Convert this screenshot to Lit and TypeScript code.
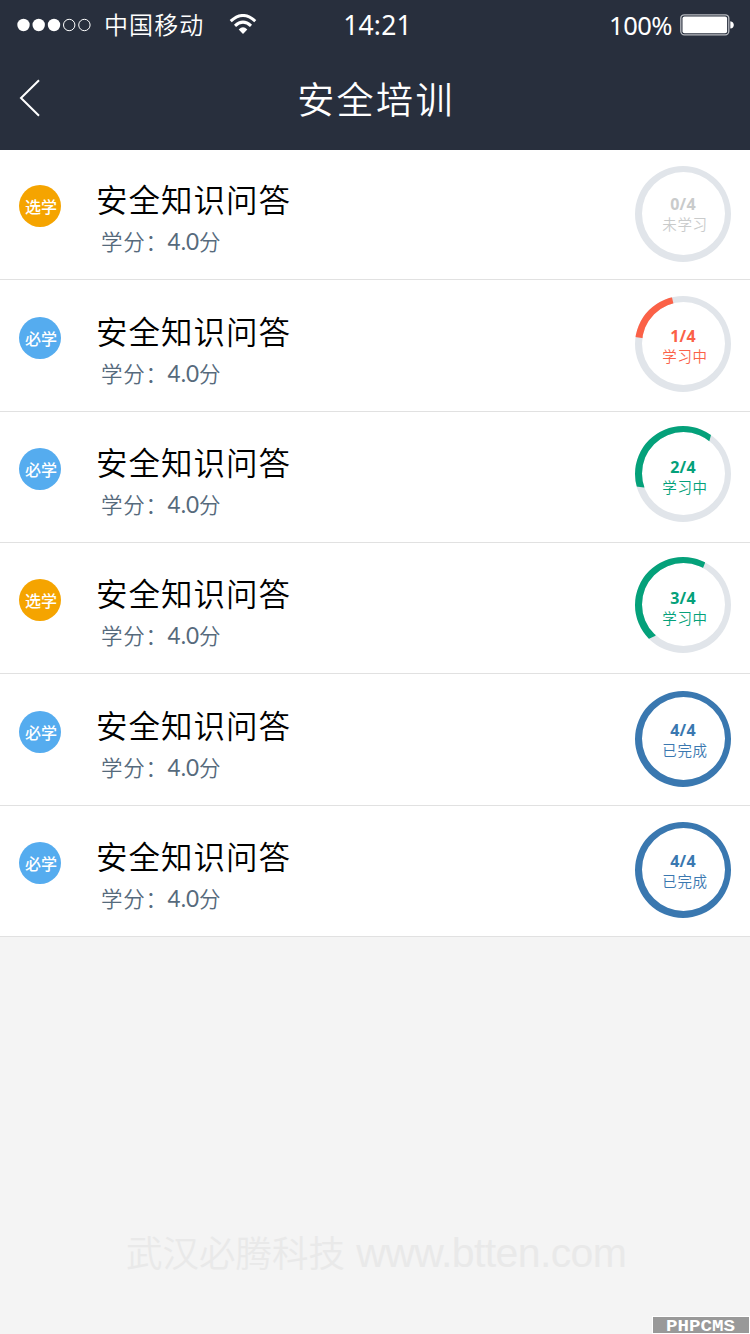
import { LitElement, html, css, svg } from "lit";
import { customElement, property } from "lit/decorators.js";
import { classMap } from "lit/directives/class-map.js";

interface Course {
  kind: "optional" | "required";
  done: number;
  state: string;
  tone: "idle" | "warm" | "green" | "blue";
  height: number;
  ringY: number;
  arc?: string;
}

const COURSES: Course[] = [
  { kind: "optional", done: 0, state: "未学习", tone: "idle", height: 130, ringY: 3 },
  { kind: "required", done: 1, state: "学习中", tone: "warm", height: 132, ringY: 1,
    arc: "M0 0L-60 -8.6L-60 -60L-14.2 -60Z" },
  { kind: "required", done: 2, state: "学习中", tone: "green", height: 131, ringY: 0,
    arc: "M0 0L-39 13.6L-47 12.6L-60 12L-60 -60L28 -60L28 -39L26.4 -33Z" },
  { kind: "optional", done: 3, state: "学习中", tone: "green", height: 131, ringY: 0,
    arc: "M0 0L-28 31L-34 33.8L-60 56L-60 -60L22 -60L22 -42L20 -37Z" },
  { kind: "required", done: 4, state: "已完成", tone: "blue", height: 132, ringY: 2 },
  { kind: "required", done: 4, state: "已完成", tone: "blue", height: 131, ringY: 2 },
];

// Outer disc minus a slightly offset inner disc.
const RING =
  "M-48 0A48 48 0 1 1 48 0A48 48 0 1 1 -48 0ZM-41 -.5A41.5 41.5 0 1 0 42 -.5A41.5 41.5 0 1 0 -41 -.5Z";

@customElement("course-row")
class CourseRow extends LitElement {
  @property({ attribute: false }) course!: Course;

  static styles = css`
    :host { display: block; }
    .row {
      box-sizing: border-box;
      height: 100%;
      display: flex;
      align-items: flex-end;
      padding: 0 19px 0 19px;
      background: #fff;
      border-bottom: 1px solid #e1e1e1;
    }
    .badge {
      width: 42px;
      height: 42px;
      margin-bottom: 52px;
      border-radius: 50%;
      color: #fff;
      font-size: 16px;
      font-weight: 500;
      line-height: 43px;
      text-align: center;
      text-indent: 2px;
      white-space: nowrap;
    }
    .optional { background: #f5a400; }
    .required { background: #55acef; }
    .copy { flex: 1; padding-left: 35px; height: 103px; }
    .title { font-size: 31.5px; letter-spacing: 1px; line-height: 44px; color: #000; font-weight: 350; }
    .credit {
      padding-left: 5px;
      font-size: 21.5px;
      letter-spacing: 0.7px;
      line-height: 42px;
      color: #566a7c;
      font-weight: 350;
      white-space: nowrap;
    }
    .num { font-family: Lato, sans-serif; font-size: 22.5px; font-weight: 400; letter-spacing: 0; }
    .progress { display: grid; width: 96px; height: 116px; }
    .progress > * { grid-area: 1 / 1; }
    .label { text-align: center; padding-top: 31px; }
    .count { font: 700 16px/20px "Open Sans", sans-serif; letter-spacing: 0.2px; }
    .state { font-size: 14.5px; line-height: 20px; letter-spacing: 0.7px; padding-left: 4px; font-weight: 350; }
    .track { fill: #e1e5ea; }
    .arc { fill: currentColor; }
    .idle { color: #c9cbcb; }
    .warm { color: #fb6147; }
    .green { color: #04a17a; }
    .blue { color: #3a78b0; }
  `;

  render() {
    const c = this.course;
    return html`<div class="row">
      <div class=${classMap({ badge: true, [c.kind]: true })}>${c.kind === "optional" ? "选学" : "必学"}</div>
      <div class="copy">
        <div class="title">安全知识问答</div>
        <div class="credit">学分：<span class="num">4.0</span>分</div>
      </div>
      <div class=${classMap({ progress: true, [c.tone]: true })}>
        <svg width="96" height="104" viewBox="0 0 96 104">
          <g transform="translate(48 ${48 + c.ringY})">
            <path class=${c.tone === "blue" ? "arc" : "track"} fill-rule="evenodd" d=${RING}></path>
            ${c.arc
              ? svg`<clipPath id="sector"><path d=${c.arc}></path></clipPath>
                <path class="arc" fill-rule="evenodd" clip-path="url(#sector)" d=${RING}></path>`
              : null}
          </g>
        </svg>
        <div class="label">
          <div class="count">${c.done}/4</div>
          <div class="state">${c.state}</div>
        </div>
      </div>
    </div>`;
  }
}

@customElement("app-root")
class AppRoot extends LitElement {
  static styles = css`
    :host {
      display: flex;
      flex-direction: column;
      height: 1334px;
      background: #f4f4f4;
      font-family: "Noto Sans CJK SC", sans-serif;
      overflow: hidden;
    }
    .header { height: 150px; background: #282f3d; color: #fff; }
    .status {
      display: grid;
      grid-template-columns: 1fr auto 1fr;
      height: 50px;
      align-items: center;
      padding: 0 16px;
    }
    .left, .right { display: flex; align-items: center; }
    .right { justify-content: flex-end; }
    .carrier { font-size: 24px; letter-spacing: 1.1px; margin: 0 0 2px 12px; line-height: 46px; font-weight: 350; }
    .wifi { margin-left: 25px; }
    .clock { font: 400 26.5px/48px "Noto Sans", sans-serif; letter-spacing: 0.2px; padding-left: 5px; }
    .percent { font: 400 25.5px/48px "Noto Sans", sans-serif; letter-spacing: -0.5px; margin-right: 8px; }
    .nav {
      display: grid;
      grid-template-columns: 60px 1fr 60px;
      height: 100px;
      align-items: center;
    }
    .back { margin: 0 0 4px 18px; display: block; }
    .heading { text-align: center; font-size: 37px; letter-spacing: 2.4px; line-height: 96px; height: 100px; padding-left: 2px; font-weight: 350; }
    .footer { flex: 1; display: flex; flex-direction: column; justify-content: flex-end; }
    .watermark { padding-left: 126px; white-space: nowrap; line-height: 60px; font-size: 36.5px; color: #e9e9e9; font-weight: 350; }
    .site { font-family: "Liberation Sans", sans-serif; font-size: 41px; font-weight: 400; letter-spacing: -0.6px; padding-left: 3px; }
    .mark {
      align-self: flex-end;
      margin: 33px 0 0 0;
      box-sizing: border-box;
      width: 98px;
      height: 18px;
      border: 1px solid #fff;
      background: #999;
      display: block;
    }
    .mark-text { font: 700 17px "Liberation Mono", monospace; fill: #fff; }
  `;

  render() {
    return html`
      <div class="header">
        <div class="status">
          <div class="left">
            <svg width="76" height="16" viewBox="0 0 76 16" fill="#fff">
              <circle cx="7.5" cy="8" r="6.2"></circle>
              <circle cx="22.7" cy="8" r="6.2"></circle>
              <circle cx="38" cy="8" r="6.2"></circle>
              <circle cx="53.2" cy="8" r="5.7" fill="none" stroke="#fff"></circle>
              <circle cx="68.4" cy="8" r="5.7" fill="none" stroke="#fff"></circle>
            </svg>
            <span class="carrier">中国移动</span>
            <svg class="wifi" width="28" height="22" viewBox="0 0 28 22" fill="none" stroke="#fff" stroke-width="3">
              <path d="M1.7 7.2Q14 -4.2 26.3 7.2"></path>
              <path d="M6 11.8Q14 4.4 22 11.8"></path>
              <path d="M9.7 15.4Q14 11.1 18.3 15.4L14 20Z" fill="#fff" stroke="none"></path>
            </svg>
          </div>
          <span class="clock">14:21</span>
          <div class="right">
            <span class="percent">100%</span>
            <svg width="54" height="22" viewBox="0 0 54 22">
              <rect x=".8" y=".8" width="48" height="20" rx="3.5" fill="none" stroke="#b8bbc0" stroke-width="1.3"></rect>
              <rect x="2.5" y="2.6" width="44.6" height="16.6" rx="2" fill="#fff"></rect>
              <path d="M50.3 7.2Q53.8 8 53.8 11T50.3 14.6Z" fill="#fff"></path>
            </svg>
          </div>
        </div>
        <div class="nav">
          <svg class="back" width="24" height="38" viewBox="0 0 24 38" fill="none" stroke="#fff" stroke-width="2">
            <path d="M21 1.2L3 19L21 36.8"></path>
          </svg>
          <div class="heading">安全培训</div>
        </div>
      </div>
      ${COURSES.map((c) => html`<course-row .course=${c} style="height:${c.height}px"></course-row>`)}
      <div class="footer">
        <div class="watermark">武汉必腾科技 <span class="site">www.btten.com</span></div>
        <svg class="mark" viewBox="0 0 96 16">
          <text class="mark-text" x="13" y="13.5" textLength="69" lengthAdjust="spacingAndGlyphs">PHPCMS</text>
        </svg>
      </div>
    `;
  }
}
